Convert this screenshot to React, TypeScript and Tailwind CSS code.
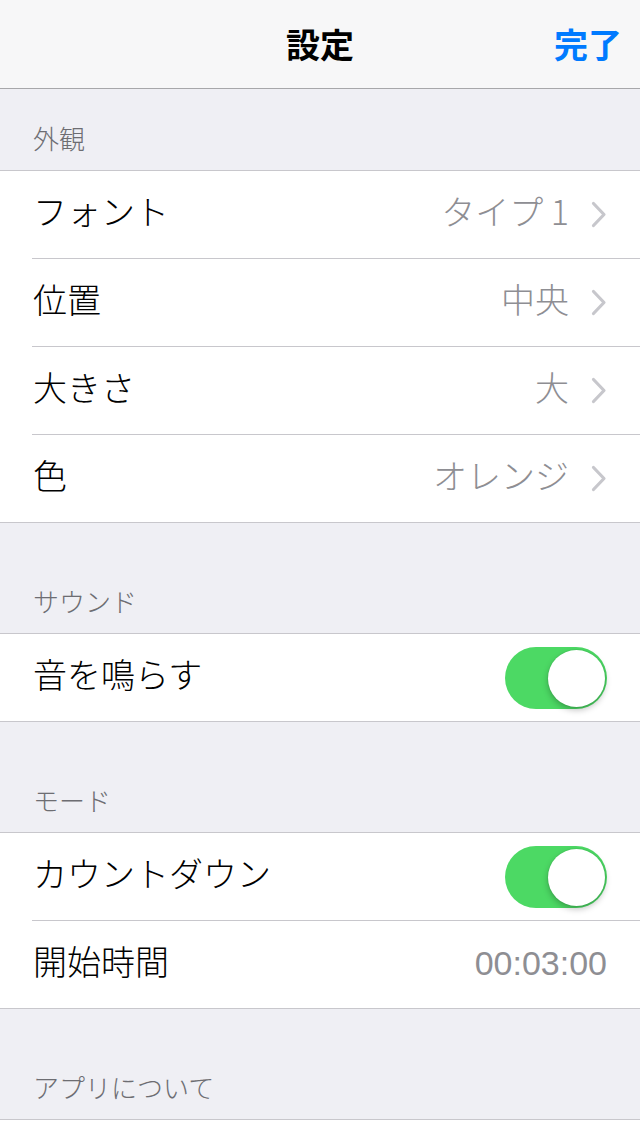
const font = {
  fontFamily: '"Noto Sans CJK JP", "Liberation Sans", sans-serif',
};

function Chevron() {
  return (
    <svg width="16" height="27" viewBox="0 0 16 27" className="ml-[22px] shrink-0">
      <path d="M2.5 2.5 L13 13.5 L2.5 24.5" fill="none" stroke="#c7c7cc" strokeWidth="3.2" strokeLinecap="round" strokeLinejoin="round" />
    </svg>
  );
}

function Toggle() {
  return (
    <div className="relative h-[62px] w-[102px] rounded-full bg-[#4cd964]">
      <div className="absolute right-[2px] top-[3px] h-[57px] w-[57px] rounded-full bg-white shadow-[0_3px_6px_rgba(0,0,0,0.25),0_0_0_1px_rgba(0,0,0,0.04)]" />
    </div>
  );
}

function SectionHeader({ title, first }: { title: string; first?: boolean }) {
  return (
    <div
      className={`flex items-end px-[33px] pb-[19px] ${first ? "h-[81px]" : "h-[110px]"}`}
    >
      <span className="text-[26px] font-light leading-none text-[#6d6d72]">{title}</span>
    </div>
  );
}

type Row = {
  label: string;
  value?: string;
  latin?: boolean;
  chevron?: boolean;
  toggle?: boolean;
};

function Group({ rows }: { rows: Row[] }) {
  return (
    <div className="border-y border-[#c8c7cc] bg-white">
      {rows.map((r, i) => (
        <div key={r.label}>
          <div className="flex h-[87px] items-center pl-[33px] pr-[33px]">
            <span className="flex-1 pb-[8px] text-[34px] font-light leading-none text-black">
              {r.label}
            </span>
            {r.value ? (
              <span
                className={
                  r.latin
                    ? "pb-[4px] font-['Liberation_Sans',sans-serif] text-[34px] leading-none text-[#8e8e93]"
                    : "pb-[8px] text-[34px] font-light leading-none text-[#8e8e93]"
                }
              >
                {r.value}
              </span>
            ) : null}
            {r.chevron ? <Chevron /> : null}
            {r.toggle ? <Toggle /> : null}
          </div>
          {i < rows.length - 1 ? <div className="ml-[32px] h-px bg-[#c8c7cc]" /> : null}
        </div>
      ))}
    </div>
  );
}

export default function App() {
  return (
    <div className="min-h-[1136px] w-[640px] bg-[#efeff4]" style={font}>
      <div className="relative flex h-[89px] items-center justify-center border-b border-[#a7a7aa] bg-[#f7f7f8]">
        <span className="text-[34px] font-bold leading-none text-black">設定</span>
        <span className="absolute right-[18px] text-[34px] font-bold leading-none text-[#007aff]">
          完了
        </span>
      </div>

      <SectionHeader title="外観" first />
      <Group
        rows={[
          { label: "フォント", value: "タイプ\u00a01", chevron: true },
          { label: "位置", value: "中央", chevron: true },
          { label: "大きさ", value: "大", chevron: true },
          { label: "色", value: "オレンジ", chevron: true },
        ]}
      />

      <SectionHeader title="サウンド" />
      <Group rows={[{ label: "音を鳴らす", toggle: true }]} />

      <SectionHeader title="モード" />
      <Group
        rows={[
          { label: "カウントダウン", toggle: true },
          { label: "開始時間", value: "00:03:00", latin: true },
        ]}
      />

      <SectionHeader title="アプリについて" />
      <div className="h-[20px] border-t border-[#c8c7cc] bg-white" />
    </div>
  );
}
